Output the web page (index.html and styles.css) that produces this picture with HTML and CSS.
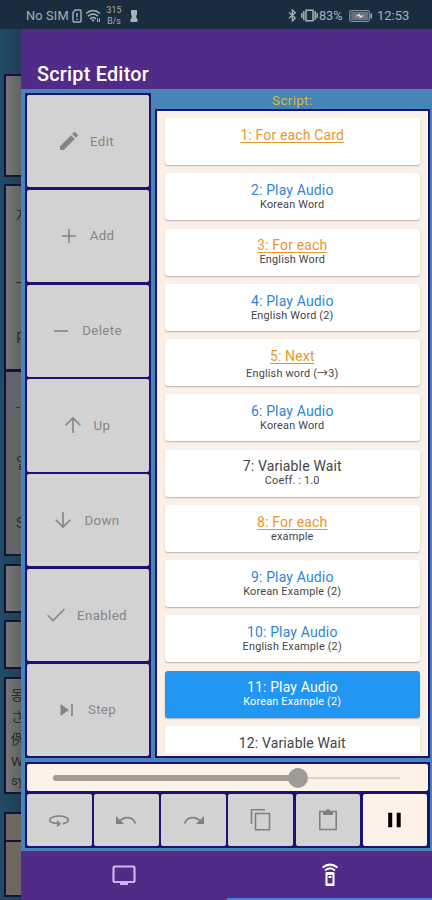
FILE: index.html
```
<!DOCTYPE html>
<html lang="en">
<head>
<meta charset="utf-8">
<title>Script Editor</title>
<link rel="stylesheet" href="styles.css">
</head>
<body>
<header class="status">
  <span class="carrier">No SIM</span>
  <svg class="s-sim" width="10" height="14" viewBox="0 0 10 14"><path d="M3.2 1H8a1 1 0 0 1 1 1v10a1 1 0 0 1-1 1H2a1 1 0 0 1-1-1V3.5ZM5 4v4M5 9.5v1.5" fill="none" stroke="currentColor" stroke-width="1.4"/></svg>
  <svg class="s-wifi" width="16" height="14" viewBox="0 0 16 14"><path d="M1 4.5Q8-1.5 15 4.5M3 7.3Q8 2.8 13 7.3M5 9.8Q8 7.3 11 9.8" fill="none" stroke="currentColor" stroke-width="1.5"/><path d="M6.2 10.6h3.6L8 13ZM12 9.5h1.2v3.5H12ZM14 9.5h1v3.5h-1Z" fill="currentColor"/></svg>
  <span class="rate">315<br>B/s</span>
  <svg class="s-chess" width="8" height="12" viewBox="0 0 8 12"><path d="M1 0h6v4.500L6.300 5.500V8L7.500 9V12H.5V9L1.700 8V5.500L1 4.500Z" fill="currentColor"/></svg>
  <span class="grow"></span>
  <svg width="9" height="13" viewBox="0 0 9 13"><path d="m1 3.500 6.300 5.500L4.400 12V1l2.900 2.800L1 9.300" fill="none" stroke="currentColor" stroke-width="1.3"/></svg>
  <svg class="s-vib" width="17" height="13" viewBox="0 0 17 13"><path d="M5 1.200h7v10.600H5ZM2.800 2v9M14.200 2v9M.8 4v5M16.200 4v5" fill="none" stroke="currentColor" stroke-width="1.500"/></svg>
  <span class="pct">83%</span>
  <svg class="s-bat" width="24" height="12" viewBox="0 0 24 12"><rect x=".7" y=".7" width="19.500" height="10.600" rx="1.500" fill="none" stroke="#87939b" stroke-width="1.200"/><path d="M2 2h17v8H2Z" fill="#66737d"/><path d="M21.500 3.500h1.500v5h-1.500Z" fill="currentColor"/><path d="m6 6.300 5-2.800v2h4.500l-5 3V6.300Z" fill="#d6dbde"/></svg>
  <span class="clock">12:53</span>
</header>
<main class="screen">
  <aside class="behind">
    <div class="bcard b1"></div>
    <div class="bcard b2"><span>자</span><span>_</span><span>P</span></div>
    <div class="bcard b3"><span>-</span><span>일</span><span>S</span></div>
    <div class="bcard b4"></div>
    <div class="bcard b5"></div>
    <div class="bcard b6"><span>동</span><span>さ</span><span>例</span><span>W</span><span>sy</span></div>
    <div class="bcard b7"></div>
    <div class="bcard b8"></div>
  </aside>
  <section class="panel">
    <h1>Script Editor</h1>
    <div class="body">
      <div class="columns">
        <nav class="tools">
          <button><svg width="24" height="24" viewBox="0 0 24 24"><path fill="currentColor" d="M3 17.250V21h3.750L17.810 9.940l-3.750-3.750ZM20.710 7.040a1 1 0 0 0 0-1.410l-2.340-2.340a1 1 0 0 0-1.410 0l-1.830 1.830 3.750 3.750Z"/></svg><span>Edit</span></button>
          <button><svg width="24" height="24" viewBox="0 0 24 24"><path d="M5 12h14M12 5v14"/></svg><span>Add</span></button>
          <button><svg width="24" height="24" viewBox="0 0 24 24"><path d="M5 12h14"/></svg><span>Delete</span></button>
          <button><svg width="24" height="24" viewBox="0 0 24 24"><path d="M12 20V5M4.700 12.300 12 5l7.300 7.300"/></svg><span>Up</span></button>
          <button><svg width="24" height="24" viewBox="0 0 24 24"><path d="M12 4v15M4.700 11.700 12 19l7.300-7.300"/></svg><span>Down</span></button>
          <button><svg width="24" height="24" viewBox="0 0 24 24"><path d="m3.700 12.200 5.300 5.300L20.500 6"/></svg><span>Enabled</span></button>
          <button><svg width="24" height="24" viewBox="0 0 24 24"><path fill="currentColor" d="M5.500 6v12l8.500-6Z"/><path d="M17 6v12"/></svg><span>Step</span></button>
        </nav>
        <div class="script">
          <h2>Script:</h2>
          <div class="list">
            <div class="items">
              <article class="loop"><b>1: For each Card</b></article>
              <article class="play"><b>2: Play Audio</b><small>Korean Word</small></article>
              <article class="loop"><b>3: For each</b><small>English Word</small></article>
              <article class="play"><b>4: Play Audio</b><small>English Word (2)</small></article>
              <article class="loop next"><b>5: Next</b><small>English word (→3)</small></article>
              <article class="play"><b>6: Play Audio</b><small>Korean Word</small></article>
              <article><b>7: Variable Wait</b><small>Coeff. : 1.0</small></article>
              <article class="loop"><b>8: For each</b><small>example</small></article>
              <article class="play"><b>9: Play Audio</b><small>Korean Example (2)</small></article>
              <article class="play"><b>10: Play Audio</b><small>English Example (2)</small></article>
              <article class="current"><b>11: Play Audio</b><small>Korean Example (2)</small></article>
              <article><b>12: Variable Wait</b></article>
            </div>
          </div>
        </div>
      </div>
      <div class="controls">
        <div class="slider"><i class="done"></i><i class="knob"></i><i class="rest"></i></div>
        <div class="row">
          <button><svg width="24" height="24" viewBox="0 0 24 24"><path d="M8 15.200C4.800 14.700 2.700 13.500 2.700 12c0-2.200 4.200-4 9.300-4s9.300 1.800 9.300 4c0 1.600-2.300 3-5.600 3.600M8 15.200h3"/><path fill="currentColor" d="m10 12 4 3.700-4 3.600Z"/></svg></button>
          <button><svg width="24" height="24" viewBox="0 0 24 24"><path d="M5.500 13.500C10 8 18.500 8 21.500 15.500"/><path fill="currentColor" d="M2 8v8h8Z"/></svg></button>
          <button><svg width="24" height="24" viewBox="0 0 24 24"><path d="M18.500 13.500C14 8 5.500 8 2.500 15.500"/><path fill="currentColor" d="M22 8v8h-8Z"/></svg></button>
          <button><svg width="24" height="24" viewBox="0 0 24 24"><path d="M2.500 16V1.800h13.500M6.500 5.500h14v16.300h-14Z"/></svg></button>
          <button><svg width="24" height="24" viewBox="0 0 24 24"><path d="M3.800 3.500h16.400v18H3.800Z"/><path fill="currentColor" d="M7 3h3a2 2 0 0 1 4 0h3v4H7Z"/></svg></button>
          <button class="pause"><svg width="24" height="24" viewBox="0 0 24 24"><path fill="currentColor" d="M5.200 4.800h4v14.400h-4ZM13.700 4.800h4v14.400h-4Z"/></svg></button>
        </div>
      </div>
    </div>
    <nav class="tabs">
      <div class="tab"><svg width="26" height="24" viewBox="0 0 26 24"><rect x="2.500" y="3.500" width="21" height="15.500" rx="1.500" fill="none" stroke="#cdb5ee" stroke-width="2.200"/><path fill="#cdb5ee" d="M9 18.500h8V22H9Z"/></svg></div>
      <div class="tab active"><svg width="18" height="24" viewBox="0 0 18 24"><path d="M1.500 4.500Q9-1.200 16.500 4.500M4 7.500Q9 3 14 7.500" fill="none" stroke="#fff" stroke-width="2"/><path fill="#fff" fill-rule="evenodd" d="M5.500 9h7q1 0 1 1v12q0 1-1 1h-7q-1 0-1-1V10q0-1 1-1Zm1 3v8.500h5V12Z"/><path fill="#fff" d="M7.500 13h3v2h-3Z"/></svg></div>
    </nav>
  </section>
</main>
</body>
</html>
```
FILE: styles.css
```
* { box-sizing: border-box; }
html, body { margin: 0; }
body {
  width: 432px;
  height: 900px;
  display: flex;
  flex-direction: column;
  overflow: hidden;
  background: #204259;
  font-family: Roboto, "Noto Sans CJK KR", sans-serif;
}
svg { display: block; flex: none; }
button { margin: 0; padding: 0; border: 0; font: inherit; }

.status {
  height: 29px;
  flex: none;
  display: flex;
  align-items: center;
  padding: 2px 21px 0 26px;
  background: #1a2d3e;
  color: #a7b1b8;
  font-size: 12.8px;
}
.carrier { width: 43px; letter-spacing: .15px; white-space: nowrap; }
.s-sim { margin-left: 3px; }
.s-wifi { margin-left: 3px; }
.rate { width: 18px; margin-left: 4px; font-size: 8.8px; line-height: 10.500px; text-align: center; }
.s-chess { margin-left: 7px; }
.grow { flex: 1; }
.s-vib { margin-left: 4px; }
.pct { width: 27px; margin-left: 1px; letter-spacing: -.1px; }
.s-bat { margin-left: 3px; }
.clock { width: 34px; margin-left: 4px; font-size: 13px; }

.screen { flex: 1; min-height: 0; display: flex; }

.behind {
  width: 21px;
  flex: none;
  padding: 45px 0 0 4px;
  overflow: hidden;
  background: linear-gradient(90deg, #204c66, #203f55);
}
.bcard {
  width: 60px;
  border: 2px solid #16103f;
  background: linear-gradient(90deg, #777, #5f5f60 17px);
  color: #292a2d;
  font-size: 15px;
  line-height: 25px;
  overflow: hidden;
}
.bcard span { display: block; padding-left: 10px; }
.b1 { height: 103px; margin-bottom: 7px; }
.b2 { height: 187px; padding-top: 18px; }
.b2 span { height: 61px; }
.b3 { height: 186px; margin-top: -1px; margin-bottom: 8px; padding-top: 23px; background: linear-gradient(#62626f, #656565 70px); }
.b3 span { height: 56px; }
.b3 span:last-child { line-height: 33px; }
.b4 { height: 49px; margin-bottom: 7px; }
.b5 { height: 49px; margin-bottom: 8px; }
.b6 { height: 117px; margin-bottom: 18px; padding-top: 4px; line-height: 24px; font-size: 13.5px; }
.b6 span { height: 22px; padding-left: 5px; }
.b6 span:last-child { line-height: 19px; }
.b7 { height: 30px; background: #6d6861; }
.b8 { height: 57px; margin-top: -2px; background: #6d6861; }

.panel { flex: 1; display: flex; flex-direction: column; min-width: 0; }
h1 {
  height: 60px;
  margin: 0;
  padding: 34px 0 0 16px;
  background: #502b88;
  color: #fff;
  font-size: 19.800px;
  font-weight: 500;
  line-height: 24px;
  letter-spacing: .25px;
}
.body {
  height: 762px;
  flex: none;
  padding: 4px 2.5px 3px 4px;
  background: #4784b8;
}
.columns { display: flex; gap: 4px; height: 665px; }
.tools {
  width: 126px;
  display: grid;
  grid-template-rows: repeat(7, 1fr);
  gap: 2.5px;
  padding: 2px;
  background: #1b1271;
}
.tools button {
  display: flex;
  align-items: center;
  justify-content: center;
  gap: 9px;
  padding-right: 5px;
  border-radius: 2px;
  background: #d2d2d2;
  color: #858585;
  font-size: 13.3px;
  letter-spacing: .35px;
}
.tools svg, .row svg { fill: none; stroke: currentColor; stroke-width: 1.6; }
.tools svg [fill], .row svg [fill] { stroke: none; }

.script { flex: 1; display: flex; flex-direction: column; min-width: 0; }
h2 {
  height: 16px;
  margin: 0;
  color: #d4b848;
  font-size: 13.5px;
  font-weight: 400;
  line-height: 15px;
  letter-spacing: .3px;
  text-align: center;
}
.list {
  height: 649px;
  padding-bottom: 3.5px;
  border: 2.5px solid #1b1271;
  border-bottom-width: 2px;
  background: #fbf0e8;
}
.items { height: 100%; padding: 7px 7.5px 0; overflow: hidden; }
article {
  height: 47px;
  margin-bottom: 8.25px;
  padding-top: 8.9px;
  border-radius: 3px;
  background: #fff;
  box-shadow: 0 1px 1.5px #b9afa8;
  color: #454545;
  text-align: center;
}
article b { display: block; font-size: 14px; font-weight: 400; line-height: 17px; letter-spacing: .15px; }
article small { display: block; font-size: 10.9px; line-height: 12.500px; letter-spacing: .18px; }
.loop b { color: #ea962e; text-decoration: underline; text-decoration-thickness: 1px; text-underline-offset: 2px; }
.play b { color: #2f86d3; }
.next small { padding-top: 3px; }
article.current { background: #2196f3; color: #fff; }

.controls { margin-top: 4px; height: 86px; padding: 2px; background: #1b1271; }
.slider {
  height: 27px;
  display: flex;
  align-items: center;
  padding: 1px 28px 0 26px;
  background: #fdf2e8;
  border-radius: 2px;
}
.done { width: 236px; height: 6px; border-radius: 3px 0 0 3px; background: #a79c93; }
.knob { width: 20px; height: 20px; margin-left: -1.5px; border-radius: 50%; background: #9e9b99; }
.rest { flex: 1; height: 2.5px; background: #ddd3ca; }
.row { display: grid; grid-template-columns: repeat(6, 1fr); gap: 2.5px; height: 52px; margin-top: 2.5px; }
.row button { display: flex; align-items: center; justify-content: center; background: #d2d2d2; color: #808080; border-radius: 2px; }
.row button.pause { background: #fdf2e8; color: #000; }

.tabs { flex: 1; display: grid; grid-template-columns: 1fr 1fr; background: #502b88; }
.tab { display: flex; align-items: center; justify-content: center; border-bottom: 2px solid transparent; }
.tab.active { padding-left: 2px; border-bottom-color: #3c86dd; }
```
